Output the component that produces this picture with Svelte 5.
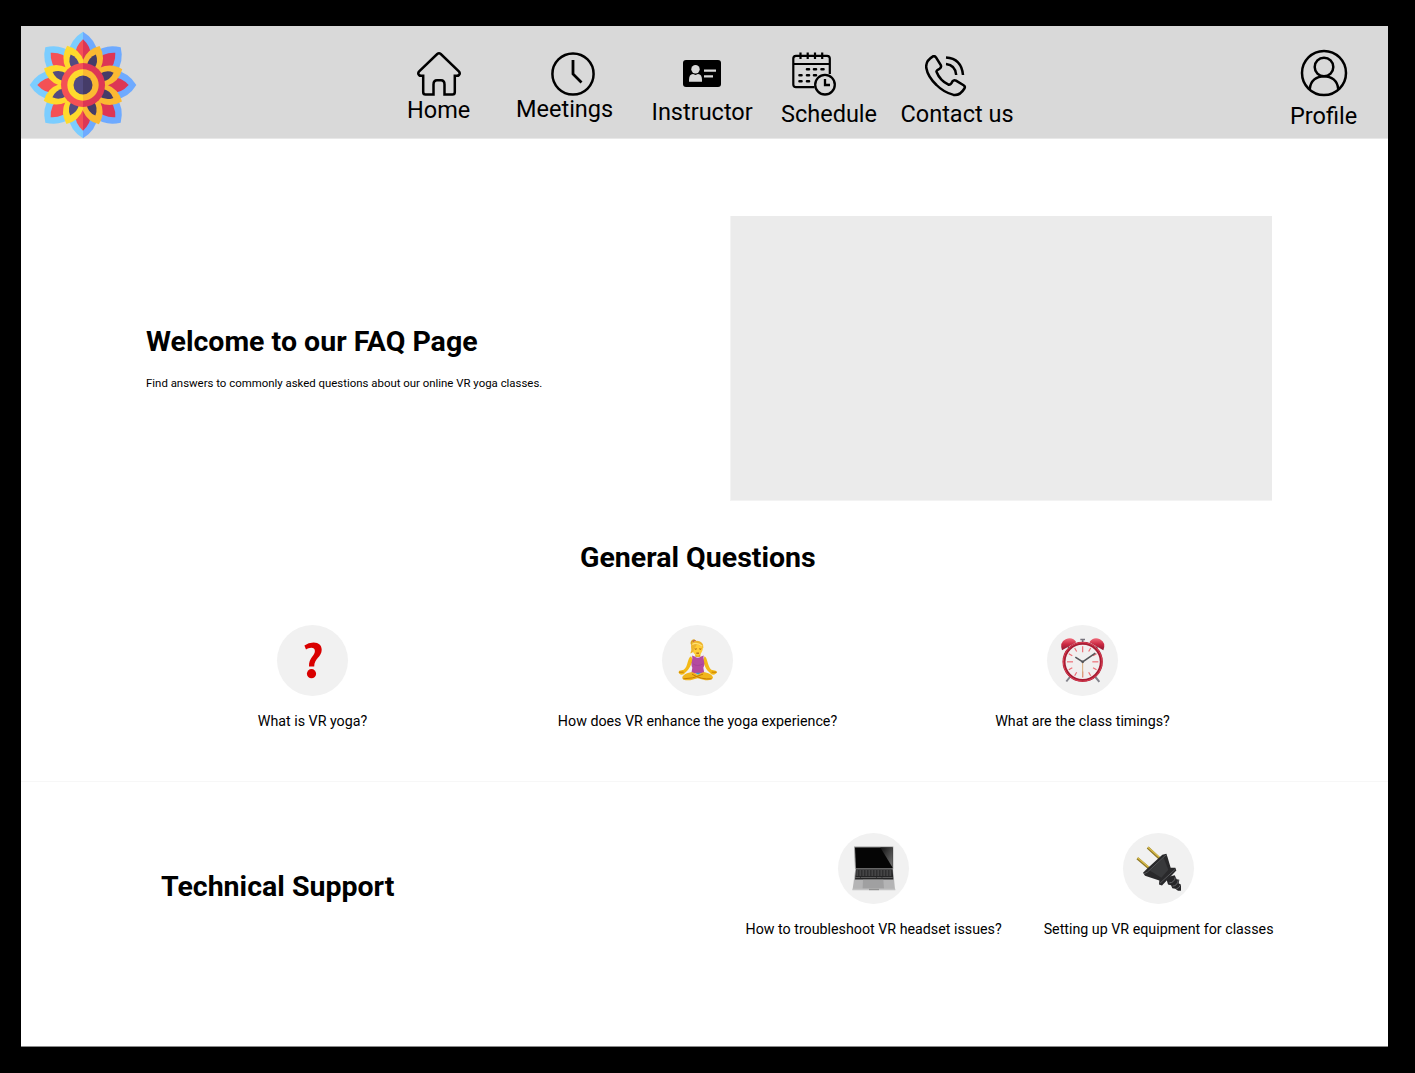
<script>
  const octants = [0, 45, 90, 135, 180, 225, 270, 315];
  const halves = [
    { side: 'left', outer: '#7bcdff', red: '#f45155', yellow: '#ffda2d', navy: '#524b80' },
    { side: 'right', outer: '#6eaaff', red: '#dd3655', yellow: '#fbb932', navy: '#453c68' }
  ];
  const ticks = Array.from({ length: 12 }, (_, i) => i * 30);
  const keyRows = [126.5, 132.5, 138.5];
</script>

{#snippet question()}
  <svg class="art" viewBox="7 5.5 71 71">
    <path d="M34.4 26 Q38.5 23 43.6 23 C48.8 23 51.7 26 51.7 30.3 C51.7 37.8 44.2 38.7 44.2 47 H39 C38.7 38 44.9 36.4 44.9 31.4 C44.9 29 43.3 28.2 41.4 28.2 C39.2 28.2 37.8 28.9 36 30 Z" fill="#d90000" />
    <circle cx="41.5" cy="54.2" r="4.6" fill="#d90000" />
  </svg>
{/snippet}

{#snippet yoga()}
  <svg class="art" viewBox="21 16.5 213 213">
    <path d="M113 79 C103 76 105 60 118 59 L126 67 Z" fill="#d9a021" />
    <path d="M114 66 L122 64" stroke="#b33d62" stroke-width="4" />
    <path d="M121 98 H136 V112 H121 Z" fill="#e5a500" />
    <path d="M108 110 C96 116 101 139 86 151 L73 154 Q68 159 73 163 Q83 170 92 158 C106 148 107 133 115 124 Z M149 110 C158 115 157 139 169 151 L182 154 Q189 158 182 163 Q172 170 163 158 C149 148 149 133 143 124 Z" fill="#f3b917" />
    <path d="M111 108 L119 111 Q128 119 138 111 L146 108 C143 123 153 130 145 145 L148 162 H109 L112 145 C105 130 115 123 111 108 Z" fill="#b44aa0" />
    <path d="M114 133 Q127 143 144 133" fill="none" stroke="#963d90" stroke-width="3" opacity=".5" />
    <path d="M113 158 C98 158 80 166 82 176 Q85 184 106 182 L128 176 L151 182 Q171 184 174 175 C174 166 159 158 144 158 L128 166 Z" fill="#f1b51b" />
    <path d="M85 178 Q112 179 144 164 M111 164 Q138 181 170 178 M72 158 L86 158 M185 158 L170 158" fill="none" stroke="#c57c05" stroke-width="3" />
    <path d="M121 160 L129 166 L138 160" fill="#3a9cc3" />
    <path d="M110 78 Q109 65 124 65 Q142 66 144 81 Q145 97 132 108 Q126 111 120 105 Q110 97 110 78" fill="#ffcd35" />
    <path d="M106 102 Q111 92 108 82 Q108 65 126 64 Q147 66 145 86 Q138 79 126 74 Q122 84 116 86 Q119 98 106 102" fill="#edb42d" />
    <path d="M112 75 Q125 66 142 80" fill="none" stroke="#ffe174" stroke-width="4" />
    <path d="M119 88 Q122 90 125 88 M133 88 Q136 90 139 88 M124 101 H132" fill="none" stroke="#9b4b10" stroke-width="3" />
  </svg>
{/snippet}

{#snippet alarm()}
  <svg class="art" viewBox="21 16.5 213 213">
    <defs>
      <linearGradient id="bell" x1="0" y1="0" x2="0" y2="1">
        <stop offset="0" stop-color="#ef6a7a" /><stop offset=".5" stop-color="#cb2942" /><stop offset="1" stop-color="#8e1730" />
      </linearGradient>
    </defs>
    <path d="M91 171 L79 186 M165 171 L178 187" stroke="#82828b" stroke-width="6" />
    <path d="M89 88 L80 76 M167 88 L176 76 M128 58 V69 M121 60 H135" stroke="#77727c" stroke-width="5" />
    <path d="M66 92 Q58 68 77 59 Q98 51 109 68 Z M190 92 Q199 69 180 59 Q160 51 148 68 Z" fill="url(#bell)" />
    <circle cx="128" cy="127" r="56" fill="#f1efef" stroke="#a51c33" stroke-width="9" />
    <circle cx="128" cy="127" r="58" fill="none" stroke="#df4054" stroke-width="3" />
    {#each ticks as t}
      <path d={t % 90 === 0 ? 'M128 80 V98' : 'M128 79 V91'} transform="rotate({t} 128 127)" stroke="#ed6b73" stroke-width="3.5" />
    {/each}
    <path d="M128 127 V171" stroke="#d8aa78" stroke-width="3" />
    <path d="M128 127 L106 113 M128 127 L166 101" stroke="#55565a" stroke-width="5" />
    <circle cx="128" cy="127" r="4" fill="#55565a" />
  </svg>
{/snippet}

{#snippet laptop()}
  <svg class="art" viewBox="24 16.5 213 213">
    <defs>
      <linearGradient id="glare" x1="0" y1="0" x2="1" y2="1">
        <stop offset="0" stop-color="#111" /><stop offset="1" stop-color="#777" />
      </linearGradient>
    </defs>
    <path d="M72 57 H190 V125 H75 Z" fill="#999" />
    <path d="M75 60 H188 V123 H78 Z" fill="#050505" />
    <path d="M151 60 H188 V121 Z" fill="url(#glare)" />
    <path d="M76 124 H189 L195 185 H68 Z" fill="#b4b4b5" />
    <path d="M78 125 H188 L190 156 H75 Z" fill="#252526" />
    {#each keyRows as y}
      <path d="M79 {y + 4} H187" stroke="#aaa" stroke-width="1.5" stroke-dasharray="6 3" />
    {/each}
    <path d="M76 150 H188" stroke="#777" stroke-width="2" stroke-dasharray="15 2 45 2" />
    <path d="M99 157 H160 L162 183 H98 Z" fill="#a0a0a1" />
    <path d="M67 184 H196 V188 H67 Z" fill="#c3c3c4" />
    <path d="M117 184 H147 V188 H117 Z" fill="#929292" />
  </svg>
{/snippet}

{#snippet plug()}
  <svg class="art" viewBox="21 16.5 213 213">
    <path d="M64 92 L101 124 M95 60 L130 92" stroke="#8f7927" stroke-width="8" />
    <path d="M65 91 L102 122 M96 59 L131 90" stroke="#d9bd4c" stroke-width="4" />
    <path d="M150 150 L176 143 L182 155 L190 157 L188 167 L195 172 V190 H186 L178 184 L169 182 L165 173 L156 171 Z" fill="#262628" />
    <path d="M160 166 Q175 166 178 149 M170 176 Q184 175 187 158 M181 184 Q190 182 193 173" fill="none" stroke="#66666a" stroke-width="3" />
    <path d="M81 136 L93 124 L139 82 L151 79 L155 90 L164 121 L178 121 L181 129 L138 174 L129 171 L130 159 L87 145 Z" fill="#29292b" />
    <path d="M101 129 L143 91 L157 127 L136 151 Z" fill="#38393b" />
    <path d="M84 139 L94 134 L147 85 L152 82 M132 167 L178 125" fill="none" stroke="#555659" stroke-width="3" />
  </svg>
{/snippet}

{#snippet faq(art, text)}
  <article class="faq">
    <div class="disc">{@render art()}</div>
    <p>{text}</p>
  </article>
{/snippet}

<div class="page">
  <header>
    <svg class="logo" viewBox="-162 -162 324 324">
      <defs>
        <clipPath id="left"><rect x="-162" y="-162" width="162.5" height="324" /></clipPath>
        <clipPath id="right"><rect x="0" y="-162" width="162" height="324" /></clipPath>
      </defs>
      {#each halves as h}
        <g clip-path="url(#{h.side})">
          {#each octants as a}
            <path transform="rotate({a})" fill={h.outer} d="M0 -160 Q39 -137 46 -91 L20 -40 H-20 L-46 -91 Q-39 -137 0 -160" />
          {/each}
          {#each octants as a}
            <path transform="rotate({a})" fill={h.red} d="M0 -137 Q27 -113 24 -78 L10 -50 H-10 L-24 -78 Q-27 -113 0 -137" />
          {/each}
          {#each octants as a}
            <path transform="rotate({a + 23})" fill={h.yellow} d="M0 -127 Q31 -104 29 -66 L10 -40 H-10 L-29 -66 Q-31 -104 0 -127" />
            <path transform="rotate({a + 23})" fill={h.navy} d="M0 -99 Q17 -82 12 -58 H-12 Q-17 -82 0 -99" />
          {/each}
          <circle r="66" fill={h.red} />
          <circle r="47" fill={h.yellow} />
          <circle r="28.5" fill={h.navy} />
        </g>
      {/each}
    </svg>
    <nav>
      <a class="home">
        <svg width="44" height="44" viewBox="0 0 44 44"><path d="M20.2 2 Q22 .6 23.8 2 L41.8 19.3 Q43.5 21.2 42 23 Q41 24 39.5 23.8 H37.8 V40 Q37.8 42.6 35.4 42.6 H27.5 V32.5 Q27.5 28.2 24 28.2 H20 Q16.5 28.2 16.5 32.5 V42.6 H8.6 Q6.2 42.6 6.2 40 V23.8 H4.5 Q3 24 2 23 Q.5 21.2 2.2 19.3 Z" /></svg>
        <span>Home</span>
      </a>
      <a class="meetings">
        <svg width="44" height="44" viewBox="0 0 44 44"><circle cx="22" cy="22" r="20.6" /><path d="M22 8 V22 L30.5 30.5" stroke-width="2.8" /></svg>
        <span>Meetings</span>
      </a>
      <a class="instructor">
        <svg width="38" height="27" viewBox="0 0 38 27">
          <rect width="38" height="27" rx="3" fill="#000" stroke="none" />
          <circle cx="12.5" cy="9.3" r="4.2" fill="#d9d9d9" stroke="none" />
          <path d="M6 21.8 V20 Q6 14.2 10 14 L12.5 15 L15 14 Q19 14.2 19 20 V21.8 Z" fill="#d9d9d9" stroke="none" />
          <path d="M21 10.7 H33 M21 16.3 H30" stroke="#d9d9d9" stroke-width="2.3" />
        </svg>
        <span>Instructor</span>
      </a>
      <a class="schedule">
        <svg width="44" height="44" viewBox="0 0 44 44">
          <path d="M22.5 35.2 H4 Q1.3 35.2 1.3 32.5 V6.5 Q1.3 3.8 4 3.8 H35 Q37.8 3.8 37.8 6.5 V22 M1.3 12 H37.8 M8.5 .5 V7 M15.7 .5 V7 M23 .5 V7 M30.2 .5 V7" stroke-width="2.2" />
          <path d="M15 17.3 H17 M22 17.3 H24 M29.5 17.3 H31.5 M7.5 23.3 H9.5 M15 23.3 H17 M22 23.3 H24 M7.5 29.2 H9.5 M15 29.2 H17" stroke-width="2.6" stroke-linecap="round" />
          <circle cx="33" cy="32.7" r="9.8" stroke-width="2.3" /><path d="M33 27 V33 H38" stroke-width="2.3" />
        </svg>
        <span>Schedule</span>
      </a>
      <a class="contact">
        <svg width="42" height="42" viewBox="0 0 42 42">
          <path d="M8 1.3 Q10 .6 11 2.5 L15.9 10.4 Q16.6 12.3 14.5 13.8 Q10.8 15.6 11.6 17 Q15 25.6 23.5 29.7 Q25.8 30 27.4 26.4 Q29 24.6 31 25.7 L38.6 30.2 Q40.6 31.5 39.4 33.5 Q35 40.8 28.6 39.9 Q18.5 37.2 11.5 30 Q2.7 21.6 1.2 12.5 Q.7 5.5 8 1.3 Z M21 2.5 Q36.5 3.5 38 20 M21 9 Q30.5 10 31.2 20" stroke-width="2.5" />
        </svg>
        <span>Contact us</span>
      </a>
      <a class="profile">
        <svg width="48" height="48" viewBox="0 0 48 48"><circle cx="24" cy="24" r="22" /><circle cx="24" cy="18" r="9.3" /><path d="M9.8 40 C10.5 31.5 16.5 27.2 24 27.2 S37.5 31.5 38.2 40" /></svg>
        <span>Profile</span>
      </a>
    </nav>
  </header>

  <main>
    <section class="hero">
      <div class="intro">
        <h1>Welcome to our FAQ Page</h1>
        <p>Find answers to commonly asked questions about our online VR yoga classes.</p>
      </div>
      <div class="placeholder"></div>
    </section>

    <section class="general">
      <h2>General Questions</h2>
      <div class="row">
        {@render faq(question, 'What is VR yoga?')}
        {@render faq(yoga, 'How does VR enhance the yoga experience?')}
        {@render faq(alarm, 'What are the class timings?')}
      </div>
    </section>

    <section class="support">
      <h2>Technical Support</h2>
      <div class="pair">
        {@render faq(laptop, 'How to troubleshoot VR headset issues?')}
        {@render faq(plug, 'Setting up VR equipment for classes')}
      </div>
    </section>
  </main>
</div>

<style>
  :global(body) { background: #000; }
  .page {
    box-sizing: border-box;
    width: 1415px;
    height: 1073px;
    padding: 26px 27px 26px 21px;
    background: #000;
    color: #000;
    font-family: Roboto, sans-serif;
    overflow: hidden;
  }
  h1, h2, p { margin: 0; white-space: nowrap; }
  h1, h2 { font-size: 28.52px; line-height: 34px; font-weight: 700; }
  header { box-sizing: border-box; display: flex; height: 113px; background: #d9d9d9; border-bottom: 1px solid #e8e8e8; }
  .logo { width: 108px; height: 108px; margin: 5px 0 0 7.5px; flex: none; }
  nav { display: flex; flex: 1; align-items: flex-start; }
  nav a { display: flex; flex-direction: column; flex: none; font-size: 23.5px; line-height: 28px; white-space: nowrap; }
  nav svg { fill: none; stroke: #000; stroke-width: 2.5; flex: none; display: block; }
  .home { width: 66px; margin-left: 270.5px; padding-top: 25.5px; }
  .home svg { margin: 0 0 .5px 10px; }
  .meetings { width: 100px; margin-left: 43px; padding-top: 26px; }
  .meetings svg { margin-left: 34.5px; margin-bottom: -.8px; }
  .instructor { width: 104px; margin-left: 35.5px; padding-top: 34px; }
  .instructor svg { margin: 0 0 11px 31px; }
  .schedule { width: 100px; margin-left: 25.5px; padding-top: 26px; }
  .schedule svg { margin: 0 0 3.7px 11px; }
  .contact { width: 116px; margin-left: 19.5px; padding-top: 29px; }
  .contact svg { margin: 0 0 2.7px 24.5px; }
  .profile { width: 70px; margin-left: auto; margin-right: 28px; padding-top: 23px; }
  .profile svg { margin: 0 0 5.3px 9.5px; }

  main { box-sizing: border-box; height: 908px; background: #fff; overflow: hidden; border-bottom: 1px solid #8a8a8a; }
  .hero { display: flex; justify-content: space-between; height: 285px; padding: 77px 116px 0 125px; }
  .intro { padding-top: 109px; }
  .intro p { margin-top: 16px; font-size: 11.41px; line-height: 16px; }
  .placeholder { box-sizing: border-box; width: 542px; height: 285px; background: #ebebeb; border-left: 1px solid #f3f3f3; border-bottom: 1px solid #f3f3f3; }
  .general { height: 281px; box-sizing: border-box; padding-top: 40px; border-bottom: 1px solid #f7f7f7; }
  .general h2 { margin-left: 559px; }
  .row { display: grid; grid-template-columns: repeat(3, 385px); margin: 50.4px 0 0 99px; }
  .faq { display: flex; flex-direction: column; align-items: center; }
  .faq p { margin-top: 14.6px; font-size: 14.25px; line-height: 20px; }
  .disc { width: 71px; height: 71px; border-radius: 50%; background: #f1f1f1; }
  .art { display: block; width: 71px; height: 71px; }
  .support { display: flex; justify-content: space-between; padding: 51.4px 114.5px 0 140px; }
  .support h2 { margin-top: 36.6px; }
  .pair { display: flex; gap: 42px; }
</style>
